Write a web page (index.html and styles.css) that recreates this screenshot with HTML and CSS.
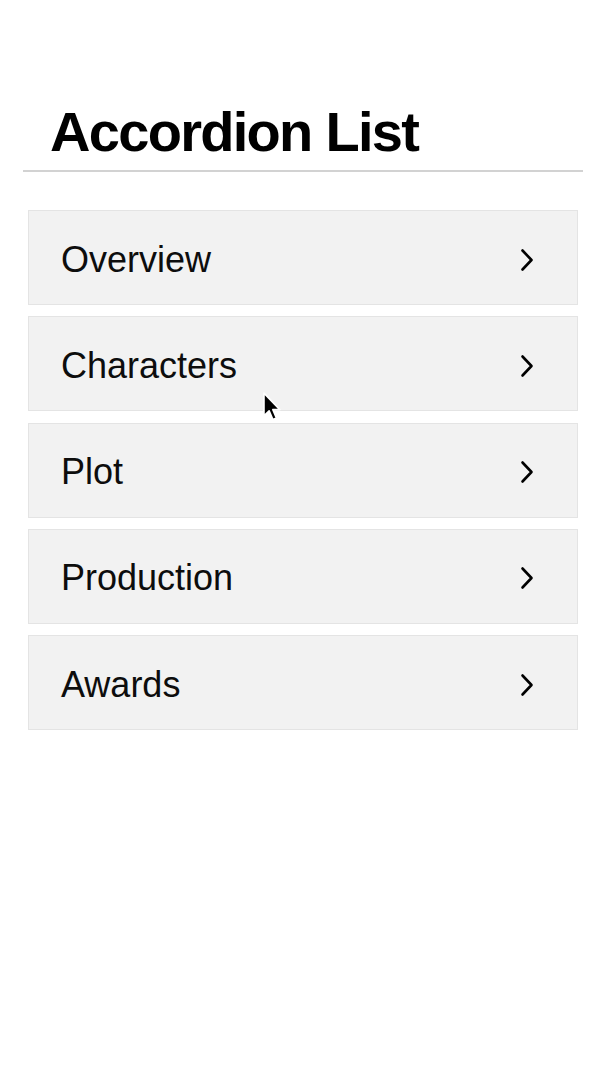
FILE: index.html
```html
<!DOCTYPE html>
<html lang="en">
<head>
<meta charset="utf-8">
<title>Accordion List</title>
<link rel="stylesheet" href="styles.css">
</head>
<body>
<div class="page">
  <header class="header">
    <h1 class="title">Accordion List</h1>
  </header>
  <ul class="list">
    <li class="row"><span class="label">Overview</span><svg class="chev" viewBox="0 0 14 24" width="14" height="24"><path d="M2.5 2.5 L11.5 12 L2.5 21.5" fill="none" stroke="#000" stroke-width="2.6" stroke-linecap="round" stroke-linejoin="round"/></svg></li>
    <li class="row"><span class="label">Characters</span><svg class="chev" viewBox="0 0 14 24" width="14" height="24"><path d="M2.5 2.5 L11.5 12 L2.5 21.5" fill="none" stroke="#000" stroke-width="2.6" stroke-linecap="round" stroke-linejoin="round"/></svg></li>
    <li class="row"><span class="label">Plot</span><svg class="chev" viewBox="0 0 14 24" width="14" height="24"><path d="M2.5 2.5 L11.5 12 L2.5 21.5" fill="none" stroke="#000" stroke-width="2.6" stroke-linecap="round" stroke-linejoin="round"/></svg></li>
    <li class="row"><span class="label">Production</span><svg class="chev" viewBox="0 0 14 24" width="14" height="24"><path d="M2.5 2.5 L11.5 12 L2.5 21.5" fill="none" stroke="#000" stroke-width="2.6" stroke-linecap="round" stroke-linejoin="round"/></svg></li>
    <li class="row"><span class="label">Awards</span><svg class="chev" viewBox="0 0 14 24" width="14" height="24"><path d="M2.5 2.5 L11.5 12 L2.5 21.5" fill="none" stroke="#000" stroke-width="2.6" stroke-linecap="round" stroke-linejoin="round"/></svg></li>
  </ul>
</div>
<svg class="cursor" viewBox="0 0 17 26" width="22" height="34"><path d="M1.5 1.5 L1.5 19 L5.5 15.2 L8.4 22 L11.2 20.8 L8.4 14.2 L13.8 14.2 Z" fill="#000" stroke="#fff" stroke-width="1.3" stroke-linejoin="round"/></svg>
</body>
</html>
```
FILE: styles.css
```css
html, body {
  margin: 0;
  padding: 0;
  background: #ffffff;
}
body {
  font-family: "Liberation Sans", Arial, Helvetica, sans-serif;
  color: #111;
  width: 604px;
  height: 1080px;
  position: relative;
  overflow: hidden;
}
.page {
  padding: 0 21px 0 23px;
}
.header {
  padding: 100px 0 6px 27px;
  border-bottom: 2px solid #d2d2d2;
}
.title {
  margin: 0;
  font-size: 56px;
  line-height: 64px;
  font-weight: 700;
  letter-spacing: -1.7px;
  color: #000;
}
.list {
  list-style: none;
  margin: 38px 5px 0 5px;
  padding: 0;
  display: flex;
  flex-direction: column;
  gap: 11.25px;
}
.row {
  box-sizing: border-box;
  height: 95px;
  background: #f2f2f2;
  border: 1px solid #e4e4e4;
  display: flex;
  align-items: center;
  justify-content: space-between;
  padding: 4px 43px 0 32px;
}
.label {
  font-size: 36px;
  line-height: 40px;
  color: #0d0d0d;
}
.chev {
  display: block;
  margin-top: 0;
}
.cursor {
  position: absolute;
  left: 262px;
  top: 391px;
}
```
